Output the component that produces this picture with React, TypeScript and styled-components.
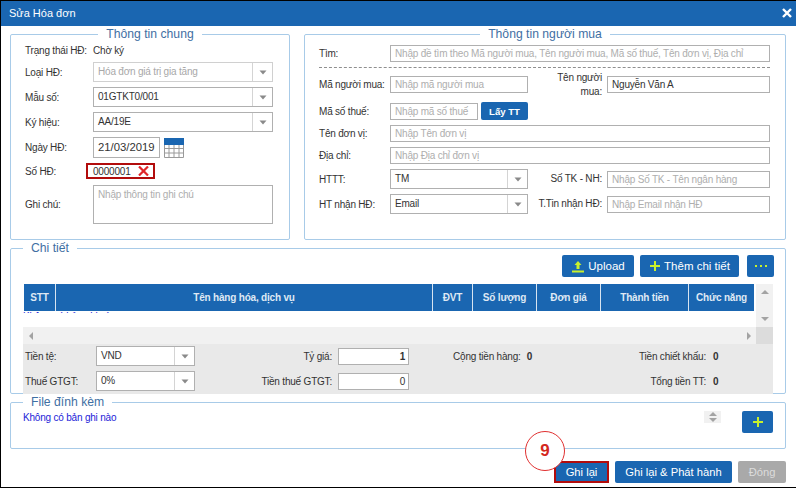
import React from 'react';
import styled, { createGlobalStyle } from 'styled-components';

const GlobalStyle = createGlobalStyle`
  html, body {
    margin: 0;
    padding: 0;
    background: #fff;
  }

  * {
    box-sizing: border-box;
  }
`;

const BLUE = '#1a66b1';
const LIME = '#c8f02c';

const Caret = () => (
  <svg width="8" height="5" viewBox="0 0 8 5" aria-hidden>
    <path d="M0.5 0.5 H7.5 L4 4.5 Z" fill="#8a8a8a" />
  </svg>
);

const PlusIcon = () => (
  <svg width="12" height="12" viewBox="0 0 12 12" aria-hidden>
    <path d="M6 1 V11 M1 6 H11" stroke={LIME} strokeWidth="2" />
  </svg>
);

const UploadIcon = () => (
  <svg width="14" height="13" viewBox="0 0 14 13" aria-hidden>
    <path d="M7 1 L10.5 5 H8.5 V9 H5.5 V5 H3.5 Z" fill={LIME} />
    <path d="M1 11.5 H13" stroke={LIME} strokeWidth="2" />
  </svg>
);

const DotsIcon = () => (
  <svg width="12" height="2" viewBox="0 0 12 2" aria-hidden>
    <path d="M0 0 H2 V2 H0 Z M5 0 H7 V2 H5 Z M10 0 H12 V2 H10 Z" fill={LIME} />
  </svg>
);

const CalendarIcon = () => (
  <svg width="20" height="20" viewBox="0 0 20 20" aria-hidden>
    <rect x="0" y="0" width="20" height="7" fill={BLUE} />
    <path
      d="M0.5 7 V19.5 H19.5 V7 M0.5 10.5 H19.5 M0.5 15 H19.5 M5 7 V19.5 M10 7 V19.5 M15 7 V19.5"
      fill="none"
      stroke="#9a9a9a"
    />
  </svg>
);

const App = () => {
  return (
    <Page>
      <GlobalStyle />
      <TitleBar>
        <span>Sửa Hóa đơn</span>
        <svg width="10" height="10" viewBox="0 0 10 10" aria-hidden>
          <path d="M1 1 L9 9 M9 1 L1 9" stroke="#fff" strokeWidth="2.4" />
        </svg>
      </TitleBar>

      <TopRow>
        <Group $width={280} $height={213}>
          <Legend $center>Thông tin chung</Legend>
          <GeneralForm>
            <StatusRow>
              <GeneralLabel>Trạng thái HĐ:</GeneralLabel>
              <Value>Chờ ký</Value>
            </StatusRow>
            <FormRow>
              <GeneralLabel>Loại HĐ:</GeneralLabel>
              <SelectBox $width={180} $disabled>
                <SelectText>Hóa đơn giá trị gia tăng</SelectText>
                <SelectArrow>
                  <Caret />
                </SelectArrow>
              </SelectBox>
            </FormRow>
            <FormRow>
              <GeneralLabel>Mẫu số:</GeneralLabel>
              <SelectBox $width={180}>
                <SelectText>01GTKT0/001</SelectText>
                <SelectArrow>
                  <Caret />
                </SelectArrow>
              </SelectBox>
            </FormRow>
            <FormRow>
              <GeneralLabel>Ký hiệu:</GeneralLabel>
              <SelectBox $width={180}>
                <SelectText>AA/19E</SelectText>
                <SelectArrow>
                  <Caret />
                </SelectArrow>
              </SelectBox>
            </FormRow>
            <FormRow>
              <GeneralLabel>Ngày HĐ:</GeneralLabel>
              <DateBox>21/03/2019</DateBox>
              <CalendarSlot>
                <CalendarIcon />
              </CalendarSlot>
            </FormRow>
            <FormRow>
              <GeneralLabel>Số HĐ:</GeneralLabel>
              <NumberBox>
                <span>0000001</span>
                <svg width="11" height="10" viewBox="0 0 11 10" aria-hidden>
                  <path d="M1 0.5 L10 9.5 M10 0.5 L1 9.5" stroke="#e0262a" strokeWidth="2.2" />
                </svg>
              </NumberBox>
            </FormRow>
            <NoteRow>
              <GeneralLabel>Ghi chú:</GeneralLabel>
              <NoteBox>Nhập thông tin ghi chú</NoteBox>
            </NoteRow>
          </GeneralForm>
        </Group>

        <Group $width={482} $height={213}>
          <Legend $center>Thông tin người mua</Legend>
          <BuyerForm>
            <FormRow>
              <BuyerLabel>Tìm:</BuyerLabel>
              <TextBox>Nhập đề tìm theo Mã người mua, Tên người mua, Mã số thuế, Tên đơn vị, Địa chỉ</TextBox>
            </FormRow>
            <Divider />
            <NameRow>
              <BuyerLabel>Mã người mua:</BuyerLabel>
              <TextBox $width={138}>Nhập mã người mua</TextBox>
              <SideLabel>Tên người mua:</SideLabel>
              <TextBox $filled>Nguyễn Văn A</TextBox>
            </NameRow>
            <TaxRow>
              <BuyerLabel>Mã số thuế:</BuyerLabel>
              <TextBox $width={88}>Nhập mã số thuế</TextBox>
              <LookupButton>Lấy TT</LookupButton>
            </TaxRow>
            <FormRow>
              <BuyerLabel>Tên đơn vị:</BuyerLabel>
              <TextBox>Nhập Tên đơn vị</TextBox>
            </FormRow>
            <FormRow>
              <BuyerLabel>Địa chỉ:</BuyerLabel>
              <TextBox>Nhập Địa chỉ đơn vị</TextBox>
            </FormRow>
            <FormRow>
              <BuyerLabel>HTTT:</BuyerLabel>
              <SelectBox $width={138}>
                <SelectText>TM</SelectText>
                <SelectArrow>
                  <Caret />
                </SelectArrow>
              </SelectBox>
              <SideLabel>Số TK - NH:</SideLabel>
              <TextBox>Nhập Số TK - Tên ngân hàng</TextBox>
            </FormRow>
            <FormRow>
              <BuyerLabel>HT nhận HĐ:</BuyerLabel>
              <SelectBox $width={138}>
                <SelectText>Email</SelectText>
                <SelectArrow>
                  <Caret />
                </SelectArrow>
              </SelectBox>
              <SideLabel>T.Tin nhận HĐ:</SideLabel>
              <TextBox>Nhập Email nhận HĐ</TextBox>
            </FormRow>
          </BuyerForm>
        </Group>
      </TopRow>

      <DetailSection>
        <Group $height={153}>
          <Legend>Chi tiết</Legend>
          <Toolbar>
            <ToolButton $width={72}>
              <UploadIcon />
              Upload
            </ToolButton>
            <ToolButton $width={99}>
              <PlusIcon />
              Thêm chi tiết
            </ToolButton>
            <MoreButton $width={27}>
              <DotsIcon />
            </MoreButton>
          </Toolbar>
          <TableArea>
            <TableMain>
              <HeadRow>
                <HeadCell $width={32}>STT</HeadCell>
                <HeadCell $width={377}>Tên hàng hóa, dịch vụ</HeadCell>
                <HeadCell $width={40}>ĐVT</HeadCell>
                <HeadCell $width={64}>Số lượng</HeadCell>
                <HeadCell $width={64}>Đơn giá</HeadCell>
                <HeadCell $width={88}>Thành tiền</HeadCell>
                <HeadCell $width={65}>Chức năng</HeadCell>
              </HeadRow>
              <ScrolledBody>
                <ScrolledText>Không có bản ghi nào</ScrolledText>
              </ScrolledBody>
            </TableMain>
            <VerticalBar>
              <ArrowUp />
              <ArrowDown />
            </VerticalBar>
          </TableArea>
          <HorizontalBar>
            <HorizontalTrack>
              <ArrowLeft />
              <ArrowRight />
            </HorizontalTrack>
            <BarCorner />
          </HorizontalBar>
          <Totals>
            <TotalsRow>
              <TotalsLabel>Tiền tệ:</TotalsLabel>
              <SelectBox $width={99}>
                <SelectText>VND</SelectText>
                <SelectArrow>
                  <Caret />
                </SelectArrow>
              </SelectBox>
              <RateLabel>Tỷ giá:</RateLabel>
              <RateInput>1</RateInput>
              <SumLeft>
                Cộng tiền hàng:<SumValue>0</SumValue>
              </SumLeft>
              <SumRight>
                Tiền chiết khấu:<SumRightValue>0</SumRightValue>
              </SumRight>
            </TotalsRow>
            <TotalsRow>
              <TotalsLabel>Thuế GTGT:</TotalsLabel>
              <SelectBox $width={99}>
                <SelectText>0%</SelectText>
                <SelectArrow>
                  <Caret />
                </SelectArrow>
              </SelectBox>
              <RateLabel>Tiền thuế GTGT:</RateLabel>
              <RateInput $light>0</RateInput>
              <SumRight>
                Tổng tiền TT:<SumRightValue>0</SumRightValue>
              </SumRight>
            </TotalsRow>
          </Totals>
        </Group>
      </DetailSection>

      <FileSection>
        <Group $height={54}>
          <Legend>File đính kèm</Legend>
          <FileRow>
            <EmptyText>Không có bản ghi nào</EmptyText>
            <Spinner>
              <ArrowUp />
              <ArrowDown />
            </Spinner>
            <AddButton>
              <PlusIcon />
            </AddButton>
          </FileRow>
        </Group>
      </FileSection>

      <ActionBar>
        <SaveWrap>
          <StepBadge>9</StepBadge>
          <SaveButton>Ghi lại</SaveButton>
        </SaveWrap>
        <ActionButton>Ghi lại &amp; Phát hành</ActionButton>
        <CloseButton>Đóng</CloseButton>
      </ActionBar>
    </Page>
  );
};

export default App;

const Page = styled.div`
  width: 796px;
  height: 488px;
  overflow: hidden;
  border-top: 1px solid #000;
  border-left: 1px solid #000;
  border-bottom: 1px solid #000;
  background: #fff;
  font-family: 'Liberation Sans', Arial, sans-serif;
  font-size: 10px;
  letter-spacing: -0.2px;
  color: #333;
`;

const TitleBar = styled.div`
  display: flex;
  align-items: center;
  justify-content: space-between;
  height: 25px;
  padding: 0 4px 2px 8px;
  background: ${BLUE};
  color: #fff;
  font-size: 11px;
  letter-spacing: 0;
`;

const TopRow = styled.div`
  display: flex;
  gap: 14px;
  margin-top: 1px;
  padding-left: 9px;
`;

const Group = styled.fieldset<{ $width?: number; $height: number }>`
  width: ${({ $width }) => ($width ? `${$width}px` : '776px')};
  height: ${({ $height }) => $height}px;
  margin: 0;
  padding: 0 12px;
  border: 1px solid #a8cbe8;
  border-radius: 2px;
  min-width: 0;
`;

const Legend = styled.legend<{ $center?: boolean }>`
  margin: ${({ $center }) => ($center ? '0 auto' : '0')};
  padding: 0 8px;
  font-size: 12.2px;
  line-height: 14px;
  letter-spacing: 0;
  color: #3f6fa3;
`;

const GeneralForm = styled.div`
  display: flex;
  flex-direction: column;
  gap: 5px;
  padding: 3px 0 0 2px;
`;

const BuyerForm = styled.div`
  display: flex;
  flex-direction: column;
  gap: 5px;
  padding: 4px 3px 0 2px;
`;

const FormRow = styled.div`
  display: flex;
  align-items: center;
`;

const StatusRow = styled(FormRow)`
  height: 13px;
`;

const NoteRow = styled(FormRow)`
  margin-top: 1px;
`;

const NameRow = styled(FormRow)`
  height: 17px;
`;

const TaxRow = styled(FormRow)`
  margin-top: 4px;
`;

const GeneralLabel = styled.label`
  flex: none;
  width: 68px;
  white-space: nowrap;
`;

const BuyerLabel = styled.label`
  flex: none;
  width: 71px;
  white-space: nowrap;
`;

const SideLabel = styled.label`
  flex: none;
  width: 74px;
  margin-right: 5px;
  padding-left: 10px;
  line-height: 14px;
  text-align: right;
`;

const Value = styled.span`
  color: #333;
`;

const SelectBox = styled.div<{ $width: number; $disabled?: boolean }>`
  flex: none;
  display: flex;
  width: ${({ $width }) => $width}px;
  height: 20px;
  border: 1px solid ${({ $disabled }) => ($disabled ? '#d0d0d0' : '#b0b0b0')};
  background: #fff;
  color: ${({ $disabled }) => ($disabled ? '#a8a8a8' : '#333')};
`;

const SelectText = styled.span`
  flex: 1;
  padding-left: 4px;
  line-height: 18px;
  white-space: nowrap;
  overflow: hidden;
`;

const SelectArrow = styled.span`
  flex: none;
  display: flex;
  align-items: center;
  justify-content: center;
  width: 20px;
  border-left: 1px solid #d4d4d4;
`;

const DateBox = styled.div`
  flex: none;
  width: 67px;
  height: 21px;
  border: 1px solid #b0b0b0;
  padding-left: 4px;
  font-size: 11.3px;
  letter-spacing: 0;
  line-height: 19px;
  color: #333;
`;

const CalendarSlot = styled.span`
  display: flex;
  margin-left: 4px;
  height: 20px;
`;

const NumberBox = styled.div`
  flex: none;
  display: flex;
  align-items: center;
  gap: 7px;
  width: 69px;
  height: 16px;
  margin-left: -7px;
  padding-left: 5px;
  border: 2px solid #b20c0c;
`;

const NoteBox = styled.div`
  flex: none;
  width: 180px;
  height: 39px;
  padding: 3px 4px;
  border: 1px solid #b0b0b0;
  color: #aeaeae;
`;

const TextBox = styled.div<{ $width?: number; $filled?: boolean }>`
  flex: ${({ $width }) => ($width ? 'none' : '1')};
  width: ${({ $width }) => ($width ? `${$width}px` : 'auto')};
  height: 17px;
  padding-left: 4px;
  border: 1px solid #b0b0b0;
  line-height: 15px;
  white-space: nowrap;
  overflow: hidden;
  color: ${({ $filled }) => ($filled ? '#333' : '#aeaeae')};
`;

const Divider = styled.div`
  height: 0;
  margin-bottom: 3px;
  border-top: 1px dashed #8f8f8f;
`;

const LookupButton = styled.button`
  width: 47px;
  height: 18px;
  margin-left: 3px;
  padding: 0;
  border: 0;
  border-radius: 2px;
  background: ${BLUE};
  color: #fff;
  font: 700 9.6px 'Liberation Sans', Arial, sans-serif;
`;

const DetailSection = styled.div`
  margin-top: 1px;
  padding-left: 9px;
`;

const FileSection = styled.div`
  margin-top: 1px;
  padding-left: 9px;
`;

const Toolbar = styled.div`
  display: flex;
  justify-content: flex-end;
  gap: 6px;
  height: 22px;
  margin-right: -1px;
`;

const ToolButton = styled.button<{ $width: number }>`
  display: flex;
  align-items: center;
  justify-content: center;
  gap: 3px;
  width: ${({ $width }) => $width}px;
  padding: 0;
  border: 0;
  border-radius: 2px;
  background: ${BLUE};
  color: #fff;
  font: 400 11.5px 'Liberation Sans', Arial, sans-serif;
`;

const MoreButton = styled(ToolButton)`
  margin-left: 2px;
`;

const TableArea = styled.div`
  display: flex;
  justify-content: space-between;
  height: 43px;
  margin-top: 7px;
`;

const TableMain = styled.div`
  width: 730px;
  margin-left: 1px;
`;

const HeadRow = styled.div`
  display: flex;
  height: 27px;
  background: ${BLUE};
`;

const HeadCell = styled.div<{ $width: number }>`
  flex: none;
  display: flex;
  align-items: center;
  justify-content: center;
  width: ${({ $width }) => $width}px;
  border-right: 1px solid #d7e4f1;
  color: #dfe9f4;
  font-weight: 700;
  font-size: 10px;

  &:last-child {
    border-right: 0;
  }
`;

const ScrolledBody = styled.div`
  height: 2px;
  margin-left: -1px;
  overflow: hidden;
`;

const ScrolledText = styled.div`
  margin-top: -1px;
  line-height: 14px;
  color: #1d1dd8;
`;

const VerticalBar = styled.div`
  display: flex;
  flex-direction: column;
  align-items: center;
  justify-content: space-between;
  width: 17px;
  padding: 6px 0;
  background: #f1f1f1;
`;

const ArrowUp = styled.span`
  width: 0;
  height: 0;
  border-left: 4px solid transparent;
  border-right: 4px solid transparent;
  border-bottom: 4px solid #a3a3a3;
`;

const ArrowDown = styled.span`
  width: 0;
  height: 0;
  border-left: 4px solid transparent;
  border-right: 4px solid transparent;
  border-top: 4px solid #a3a3a3;
`;

const ArrowLeft = styled.span`
  width: 0;
  height: 0;
  border-top: 4px solid transparent;
  border-bottom: 4px solid transparent;
  border-right: 4px solid #a3a3a3;
`;

const ArrowRight = styled.span`
  width: 0;
  height: 0;
  border-top: 4px solid transparent;
  border-bottom: 4px solid transparent;
  border-left: 4px solid #a3a3a3;
`;

const HorizontalBar = styled.div`
  display: flex;
  height: 17px;
`;

const HorizontalTrack = styled.div`
  flex: 1;
  display: flex;
  align-items: center;
  justify-content: space-between;
  padding: 0 5px 0 6px;
  background: #f1f1f1;
`;

const BarCorner = styled.div`
  width: 17px;
  background: #dcdcdc;
`;

const Totals = styled.div`
  display: flex;
  flex-direction: column;
  gap: 5px;
  height: 50px;
  padding-top: 2px;
  background: #e9e9e9;
`;

const TotalsRow = styled.div`
  display: flex;
  align-items: center;
  height: 20px;
`;

const TotalsLabel = styled.label`
  flex: none;
  width: 73px;
  padding-left: 2px;
  white-space: nowrap;
`;

const RateLabel = styled.label`
  flex: none;
  width: 137px;
  margin-right: 6px;
  text-align: right;
  white-space: nowrap;
`;

const RateInput = styled.div<{ $light?: boolean }>`
  flex: none;
  width: 71px;
  height: 17px;
  padding-right: 3px;
  border: 1px solid #b0b0b0;
  background: #fff;
  line-height: 15px;
  text-align: right;
  font-weight: ${({ $light }) => ($light ? 400 : 700)};
`;

const SumLeft = styled.div`
  margin-left: 44px;
  white-space: nowrap;
`;

const SumValue = styled.b`
  margin-left: 6px;
  font-weight: 700;
`;

const SumRight = styled.div`
  display: flex;
  margin-left: auto;
  white-space: nowrap;
`;

const SumRightValue = styled.b`
  width: 60px;
  margin-left: 7px;
  font-weight: 700;
`;

const FileRow = styled.div`
  display: flex;
  align-items: flex-start;
  padding-top: 2px;
`;

const EmptyText = styled.span`
  line-height: 14px;
  color: #1d1dd8;
`;

const Spinner = styled.div`
  display: flex;
  flex-direction: column;
  align-items: center;
  justify-content: center;
  gap: 2px;
  width: 17px;
  height: 12px;
  margin-left: auto;
  background: #f1f1f1;
`;

const AddButton = styled.button`
  display: flex;
  align-items: center;
  justify-content: center;
  width: 31px;
  height: 22px;
  margin-left: 21px;
  padding: 0;
  border: 0;
  border-radius: 2px;
  background: ${BLUE};
`;

const ActionBar = styled.div`
  display: flex;
  justify-content: flex-end;
  gap: 6px;
  margin-top: 12px;
  padding-right: 10px;
`;

const ActionButton = styled.button`
  height: 22px;
  width: 117px;
  padding: 0;
  border: 0;
  border-radius: 2px;
  background: ${BLUE};
  color: #fff;
  font: 400 11.2px 'Liberation Sans', Arial, sans-serif;
`;

const SaveWrap = styled.div`
  position: relative;
`;

const SaveButton = styled(ActionButton)`
  display: block;
  width: 55px;
  border: 2px solid #b20c0c;
  border-radius: 0;
`;

const CloseButton = styled(ActionButton)`
  width: 48px;
  background: #a9a9a9;
  color: #dcdcdc;
`;

const StepBadge = styled.div`
  position: absolute;
  left: -29px;
  top: -30px;
  display: flex;
  align-items: center;
  justify-content: center;
  width: 40px;
  height: 40px;
  border: 1.5px solid #e03030;
  border-radius: 50%;
  background: #fff;
  color: #d4281e;
  font-size: 17px;
  font-weight: 700;
`;
